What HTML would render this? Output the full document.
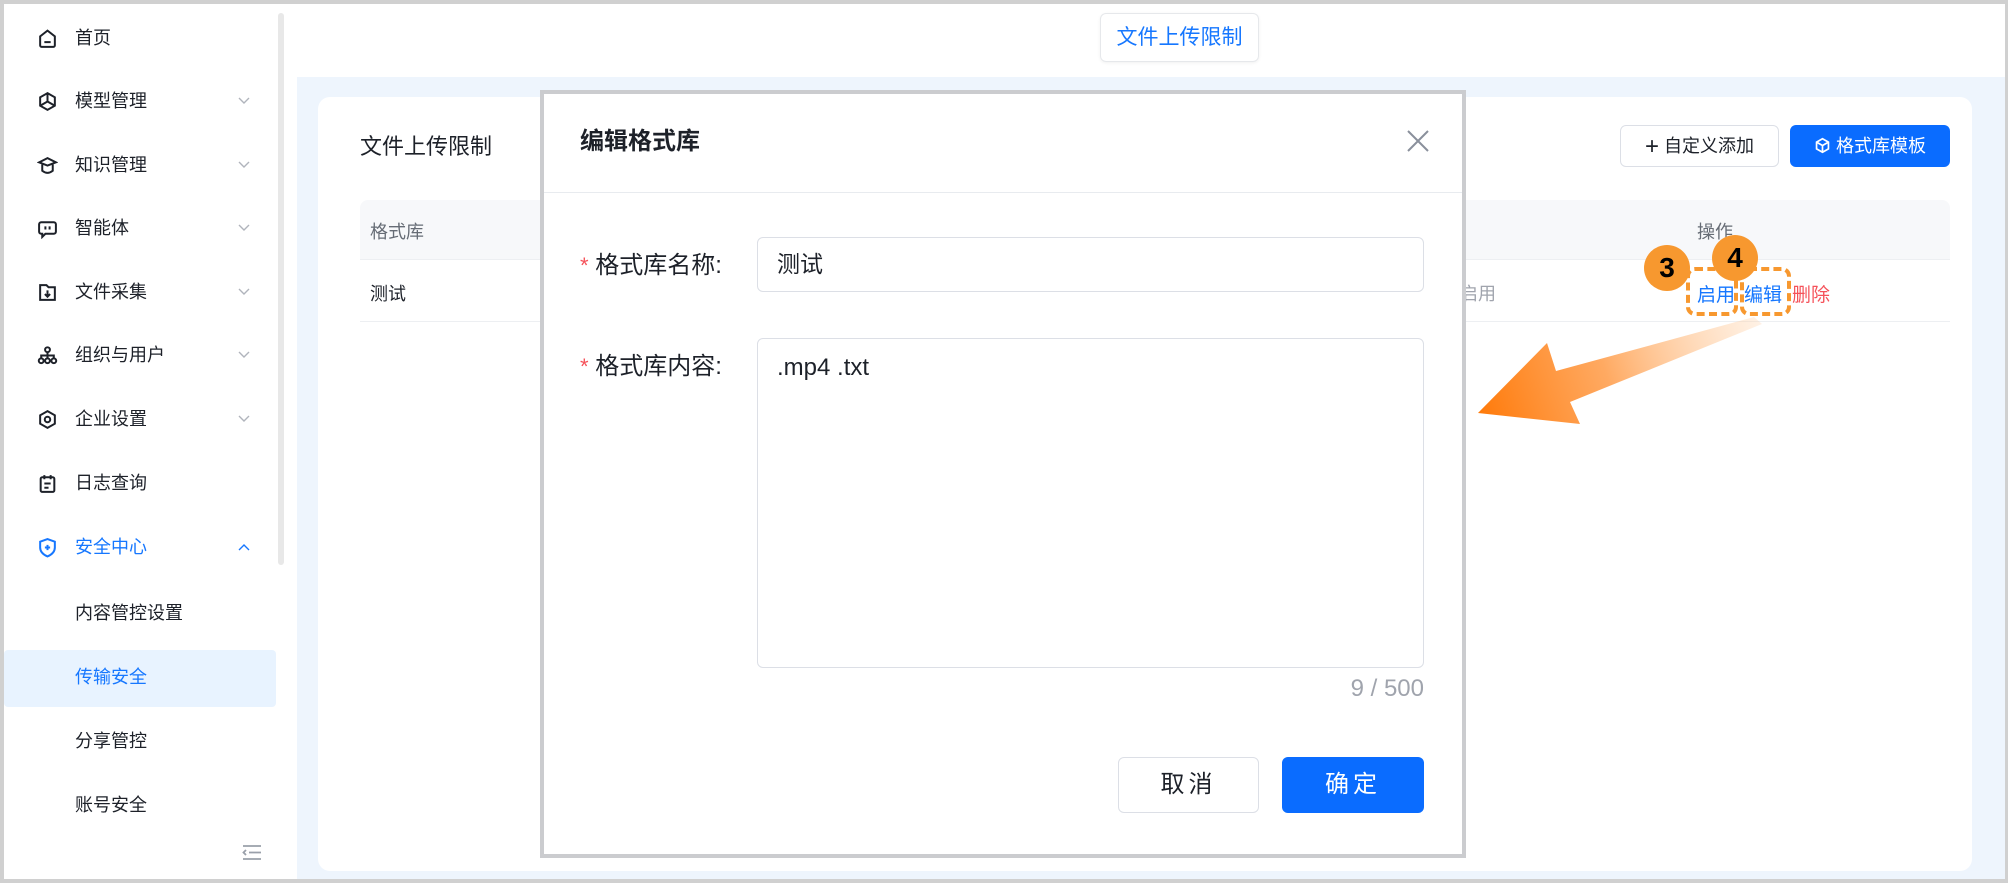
<!DOCTYPE html>
<html><head><meta charset="utf-8"><style>
*{box-sizing:border-box;margin:0;padding:0}
body{width:2008px;height:883px;position:relative;overflow:hidden;background:#fff;font-family:"Liberation Sans","Noto Sans CJK SC",sans-serif;color:#1d2129}
.a{position:absolute}
.frame{left:0;top:0;width:2008px;height:883px;border:4px solid #d0d0d0;border-right-width:3px;border-bottom-width:4px;z-index:50;pointer-events:none}
.nav{left:0;top:0;width:297px;height:883px;background:#fff}
.it{position:absolute;left:75px;font-size:18px;line-height:24px;color:#1d2129;white-space:nowrap}
.ic{position:absolute;left:37px;width:21px;height:21px}
.chev{position:absolute;left:238px;width:12px;height:8px}
.blue{color:#1677ff}
.btn{position:absolute;border-radius:6px;text-align:center;white-space:nowrap}
</style></head><body>
<div class="a nav">
  <div class="a" style="left:278px;top:13px;width:6px;height:552px;background:#e8e8e8;border-radius:3px"></div>
  <svg class="ic" style="top:28px" viewBox="0 0 20 20" fill="none" stroke="#1d2129" stroke-width="1.9"><path d="M3 8 L10 2.5 L17 8 V16.5 a1.5 1.5 0 0 1 -1.5 1.5 H4.5 a1.5 1.5 0 0 1 -1.5 -1.5Z M7 13.5 H13"/></svg>
  <div class="it" style="top:26px">首页</div>
  <svg class="ic" style="top:91px" viewBox="0 0 20 20" fill="none" stroke="#1d2129" stroke-width="1.9"><path d="M10 2 L17 6 V14 L10 18 L3 14 V6Z M10 10 V2 M10 10 L3 14 M10 10 L17 14"/></svg>
  <div class="it" style="top:89px">模型管理</div>
  <svg class="ic" style="top:155px" viewBox="0 0 20 20" fill="none" stroke="#1d2129" stroke-width="1.9"><path d="M2 7 L10 3 L18 7 L10 10Z M5 9 V15 Q10 19 15 15 V9"/></svg>
  <div class="it" style="top:153px">知识管理</div>
  <svg class="ic" style="top:218px" viewBox="0 0 20 20" fill="none" stroke="#1d2129" stroke-width="1.9"><path d="M4 4 H16 a2 2 0 0 1 2 2 V13 a2 2 0 0 1 -2 2 H8 L5 18 V15 H4 a2 2 0 0 1 -2 -2 V6 a2 2 0 0 1 2 -2Z M8 8 V11 M12 8 V11"/></svg>
  <div class="it" style="top:216px">智能体</div>
  <svg class="ic" style="top:282px" viewBox="0 0 20 20" fill="none" stroke="#1d2129" stroke-width="1.9"><path d="M3 3 H9 L11 5 H17 V17 H3Z M10 8 V14 M7.5 11.5 L10 14 L12.5 11.5"/></svg>
  <div class="it" style="top:280px">文件采集</div>
  <svg class="ic" style="top:345px" viewBox="0 0 20 20" fill="none" stroke="#1d2129" stroke-width="1.9"><circle cx="10" cy="4.5" r="2.3"/><circle cx="4" cy="15" r="2.3"/><circle cx="10" cy="15" r="2.3"/><circle cx="16" cy="15" r="2.3"/><path d="M10 7 V12.5 M4 12.5 V10 H16 V12.5"/></svg>
  <div class="it" style="top:343px">组织与用户</div>
  <svg class="ic" style="top:409px" viewBox="0 0 20 20" fill="none" stroke="#1d2129" stroke-width="1.9"><path d="M10 2 L17 6 V14 L10 18 L3 14 V6Z"/><circle cx="10" cy="10" r="2.6"/></svg>
  <div class="it" style="top:407px">企业设置</div>
  <svg class="ic" style="top:473px" viewBox="0 0 20 20" fill="none" stroke="#1d2129" stroke-width="1.9"><rect x="3.5" y="4" width="13" height="14" rx="1.5"/><path d="M7 2 V6 M13 2 V6 M7 10 H13 M7 14 H11"/></svg>
  <div class="it" style="top:471px">日志查询</div>
  <svg class="ic" style="top:537px" viewBox="0 0 20 20" fill="none" stroke="#1677ff" stroke-width="1.9"><path d="M10 2 L17 4.5 V10 Q17 15.5 10 18.5 Q3 15.5 3 10 V4.5Z M10 7.5 V12.5 M7.5 10 H12.5"/></svg>
  <div class="it blue" style="top:535px">安全中心</div>
  <svg class="chev" style="top:543px" viewBox="0 0 12 8" fill="none" stroke="#1677ff" stroke-width="1.4"><path d="M1 7 L6 2 L11 7"/></svg>
  <div class="it" style="top:601px">内容管控设置</div>
  <div class="a" style="left:4px;top:650px;width:272px;height:57px;background:#e8f3ff;border-radius:4px"></div>
  <div class="it blue" style="top:665px">传输安全</div>
  <div class="it" style="top:729px">分享管控</div>
  <div class="it" style="top:793px">账号安全</div>
  <svg class="a" style="left:242px;top:844px" width="20" height="17" viewBox="0 0 20 17" fill="none" stroke="#9aa0aa" stroke-width="1.8"><path d="M1 2 H19 M7 8.5 H19 M1 15 H19 M4 6 L1.5 8.5 L4 11"/></svg>
</div>
<svg class="a" style="left:238px;top:97px" width="12" height="8" viewBox="0 0 12 8" fill="none" stroke="#b0b4bc" stroke-width="1.4"><path d="M1 1 L6 6 L11 1"/></svg>
<svg class="a" style="left:238px;top:161px" width="12" height="8" viewBox="0 0 12 8" fill="none" stroke="#b0b4bc" stroke-width="1.4"><path d="M1 1 L6 6 L11 1"/></svg>
<svg class="a" style="left:238px;top:224px" width="12" height="8" viewBox="0 0 12 8" fill="none" stroke="#b0b4bc" stroke-width="1.4"><path d="M1 1 L6 6 L11 1"/></svg>
<svg class="a" style="left:238px;top:288px" width="12" height="8" viewBox="0 0 12 8" fill="none" stroke="#b0b4bc" stroke-width="1.4"><path d="M1 1 L6 6 L11 1"/></svg>
<svg class="a" style="left:238px;top:351px" width="12" height="8" viewBox="0 0 12 8" fill="none" stroke="#b0b4bc" stroke-width="1.4"><path d="M1 1 L6 6 L11 1"/></svg>
<svg class="a" style="left:238px;top:415px" width="12" height="8" viewBox="0 0 12 8" fill="none" stroke="#b0b4bc" stroke-width="1.4"><path d="M1 1 L6 6 L11 1"/></svg>

<div class="btn blue" style="left:1100px;top:13px;width:159px;height:49px;border:1px solid #e6e8eb;box-shadow:0 1px 3px rgba(0,0,0,.06);font-size:21px;line-height:47px;color:#1677ff">文件上传限制</div>
<div class="a" style="left:297px;top:77px;width:1711px;height:806px;background:#eef5fd"></div>
<div class="a" style="left:318px;top:97px;width:1654px;height:774px;background:#fff;border-radius:12px"></div>
<div class="a" style="left:360px;top:132px;font-size:22px;line-height:30px">文件上传限制</div>
<div class="btn" style="left:1620px;top:125px;width:159px;height:42px;border:1px solid #dcdfe6;font-size:18px;line-height:40px;color:#1d2129"><span style="font-size:24px;font-weight:300;vertical-align:-2px">+</span> 自定义添加</div>
<div class="btn" style="left:1790px;top:125px;width:160px;height:42px;background:#0a6cff;color:#fff;font-size:18px;line-height:42px"><svg width="17" height="17" viewBox="0 0 20 20" fill="none" stroke="#fff" stroke-width="2" style="vertical-align:-2px"><path d="M10 2 L17 6 V14 L10 18 L3 14 V6Z M3 6 L10 10 L17 6 M10 10 V18"/></svg> 格式库模板</div>
<div class="a" style="left:360px;top:200px;width:1590px;height:60px;background:#f7f8fa;border-radius:8px 8px 0 0;border-bottom:1px solid #edeff2"></div>
<div class="a" style="left:370px;top:218px;font-size:18px;color:#666c75">格式库</div>
<div class="a" style="left:1429px;top:218px;font-size:18px;color:#666c75">名称</div>
<div class="a" style="left:1697px;top:218px;font-size:18px;color:#666c75">操作</div>
<div class="a" style="left:360px;top:321px;width:1590px;height:1px;background:#edeff2"></div>
<div class="a" style="left:370px;top:280px;font-size:18px">测试</div>
<div class="a" style="left:1442px;top:280px;font-size:18px;color:#a0a4ad">未启用</div>
<div class="a" style="left:1697px;top:280px;font-size:19px;color:#1677ff">启用</div>
<div class="a" style="left:1744px;top:280px;font-size:19px;color:#1677ff">编辑</div>
<div class="a" style="left:1792px;top:280px;font-size:19px;color:#f5525a">删除</div>
<div class="a" style="left:1686px;top:267px;width:52px;height:49px;border:4px dashed #f7982f;border-radius:9px"></div>
<div class="a" style="left:1740px;top:267px;width:51px;height:49px;border:4px dashed #f7982f;border-radius:9px"></div>
<div class="a" style="left:1644px;top:245px;width:46px;height:46px;border-radius:50%;background:#f7982f;font:bold 28px/46px 'Liberation Sans',sans-serif;text-align:center;color:#000">3</div>
<div class="a" style="left:1712px;top:235px;width:46px;height:46px;border-radius:50%;background:#f7982f;font:bold 28px/46px 'Liberation Sans',sans-serif;text-align:center;color:#000">4</div>
<svg class="a" style="left:0;top:0" width="2008" height="883">
<defs><linearGradient id="g" x1="1478" y1="413" x2="1760" y2="320" gradientUnits="userSpaceOnUse"><stop offset="0" stop-color="#ff7a0a"/><stop offset="0.45" stop-color="#ffa050" stop-opacity=".9"/><stop offset="1" stop-color="#ffd2a8" stop-opacity=".3"/></linearGradient></defs>
<path d="M1478 413 L1547 343 L1556 371 L1754 317 L1762 324 L1570 402 L1580 424Z" fill="url(#g)"/>
</svg>
<div class="a" style="left:540px;top:90px;width:926px;height:768px;background:#fff;border:4px solid #cbcccf"></div>
<div class="a" style="left:580px;top:126px;font-size:24px;font-weight:bold;line-height:32px">编辑格式库</div>
<svg class="a" style="left:1406px;top:129px" width="24" height="24" viewBox="0 0 24 24" fill="none" stroke="#8a909c" stroke-width="2"><path d="M2 2 L22 22 M22 2 L2 22"/></svg>
<div class="a" style="left:544px;top:192px;width:918px;height:1px;background:#e8ebef"></div>
<div class="a" style="left:580px;top:249px;font-size:24px;line-height:34px"><span style="color:#f5525a;font-size:22px">*</span> 格式库名称:</div>
<div class="a" style="left:757px;top:237px;width:667px;height:55px;border:1px solid #dcdfe6;border-radius:6px;font-size:23px;line-height:53px;padding-left:19px">测试</div>
<div class="a" style="left:580px;top:350px;font-size:24px;line-height:34px"><span style="color:#f5525a;font-size:22px">*</span> 格式库内容:</div>
<div class="a" style="left:757px;top:338px;width:667px;height:330px;border:1px solid #dcdfe6;border-radius:6px;font-size:24px;line-height:32px;padding:13px 19px">.mp4 .txt</div>
<div class="a" style="left:1280px;top:675px;width:144px;text-align:right;font-size:24px;color:#a0a4ad">9 / 500</div>
<div class="btn" style="left:1118px;top:757px;width:141px;height:56px;border:1px solid #dcdfe6;font-size:24px;line-height:54px;letter-spacing:4px">取消</div>
<div class="btn" style="left:1282px;top:757px;width:142px;height:56px;background:#0a6cff;color:#fff;font-size:24px;line-height:56px;letter-spacing:4px">确定</div>
<div class="a frame"></div>
</body></html>
